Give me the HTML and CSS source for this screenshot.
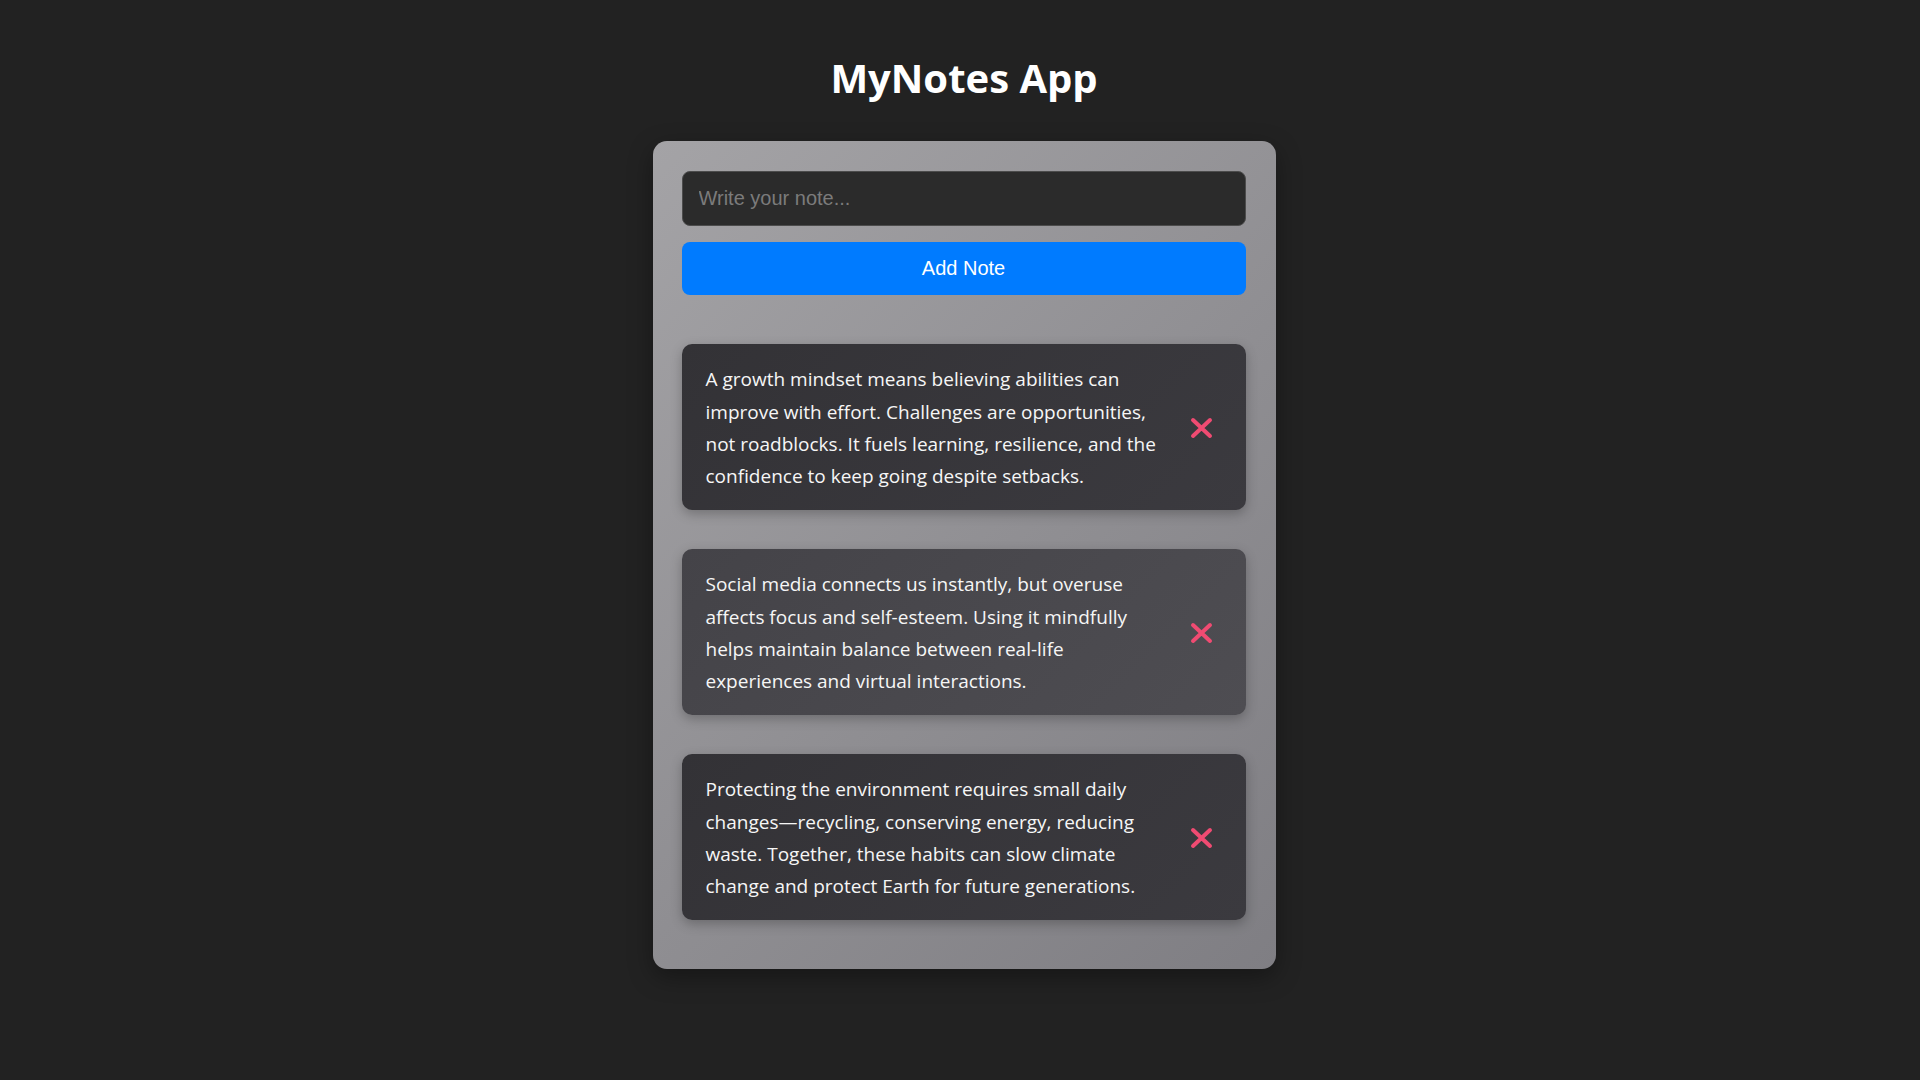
FILE: index.html
```html
<!DOCTYPE html>
<html lang="en">
<head>
  <meta charset="UTF-8">
  <meta name="viewport" content="width=device-width, initial-scale=1.0">
  <title>MyNotes App</title>
  <link rel="stylesheet" href="styles.css">
</head>
<body>
  <h1 class="title">MyNotes App</h1>

  <div class="notes-card">
    <input type="text" class="note-input" placeholder="Write your note...">
    <button class="add-btn">Add Note</button>

    <div class="notes-list">
      <div class="note">
        <p class="note-text">A growth mindset means believing abilities can improve with effort. Challenges are opportunities, not roadblocks. It fuels learning, resilience, and the confidence to keep going despite setbacks.</p>
        <button class="delete-btn" aria-label="Delete note">
          <svg width="23" height="22" viewBox="0 0 23 22"><path d="M3 3 L20 19 M20 3 L3 19" stroke="#f04b72" stroke-width="4" stroke-linecap="round" fill="none"/></svg>
        </button>
      </div>

      <div class="note">
        <p class="note-text">Social media connects us instantly, but overuse affects focus and self-esteem. Using it mindfully helps maintain balance between real-life experiences and virtual interactions.</p>
        <button class="delete-btn" aria-label="Delete note">
          <svg width="23" height="22" viewBox="0 0 23 22"><path d="M3 3 L20 19 M20 3 L3 19" stroke="#f04b72" stroke-width="4" stroke-linecap="round" fill="none"/></svg>
        </button>
      </div>

      <div class="note">
        <p class="note-text">Protecting the environment requires small daily changes—recycling, conserving energy, reducing waste. Together, these habits can slow climate change and protect Earth for future generations.</p>
        <button class="delete-btn" aria-label="Delete note">
          <svg width="23" height="22" viewBox="0 0 23 22"><path d="M3 3 L20 19 M20 3 L3 19" stroke="#f04b72" stroke-width="4" stroke-linecap="round" fill="none"/></svg>
        </button>
      </div>
    </div>
  </div>
</body>
</html>
```

FILE: styles.css
```css
* {
  margin: 0;
  padding: 0;
  box-sizing: border-box;
}

body {
  font-family: "Open Sans", "Noto Sans", sans-serif;
  background-color: #222222;
  color: #fff;
  display: flex;
  flex-direction: column;
  align-items: center;
  padding: 50px 0 0 8px;
  min-height: 100vh;
}

.title {
  font-size: 40px;
  font-weight: 700;
  line-height: normal;
  margin-bottom: 36px;
}

.notes-card {
  width: 623px;
  padding: 30px 30px 49px 29px;
  border-radius: 14px;
  background: linear-gradient(135deg, #a4a3a6 0%, #8f8e92 55%, #7f7e83 100%);
  box-shadow: 0 8px 24px rgba(0, 0, 0, 0.35);
  display: flex;
  flex-direction: column;
}

.note-input {
  width: 100%;
  height: 55px;
  padding: 15px 16px;
  font-family: "Liberation Sans", Arial, sans-serif;
  font-size: 20px;
  color: #fff;
  background-color: #2b2b2b;
  border: 1px solid #4c4c4c;
  border-radius: 8px;
  outline: none;
}

.note-input::placeholder {
  color: #7b7b7b;
}

.add-btn {
  margin-top: 16px;
  height: 53px;
  font-family: "Liberation Sans", Arial, sans-serif;
  font-size: 20px;
  color: #fff;
  background-color: #007bff;
  border: none;
  border-radius: 8px;
  cursor: pointer;
}

.notes-list {
  margin-top: 49px;
  display: flex;
  flex-direction: column;
  gap: 39px;
}

.note {
  display: flex;
  align-items: center;
  gap: 12px;
  min-height: 166px;
  padding: 19px 24px 17px;
  border-radius: 10px;
  background: linear-gradient(135deg, #333236 0%, #3b3a3f 100%);
  box-shadow: 0 4px 12px rgba(0, 0, 0, 0.25);
}

.note:nth-child(even) {
  background: linear-gradient(135deg, #444348 0%, #4e4d52 100%);
}

.note-text {
  flex: 1;
  font-size: 19px;
  line-height: 1.7;
  color: #f6f6f6;
}

.delete-btn {
  display: flex;
  align-items: center;
  justify-content: center;
  padding: 0 9px;
  background: none;
  border: none;
  cursor: pointer;
}
```
